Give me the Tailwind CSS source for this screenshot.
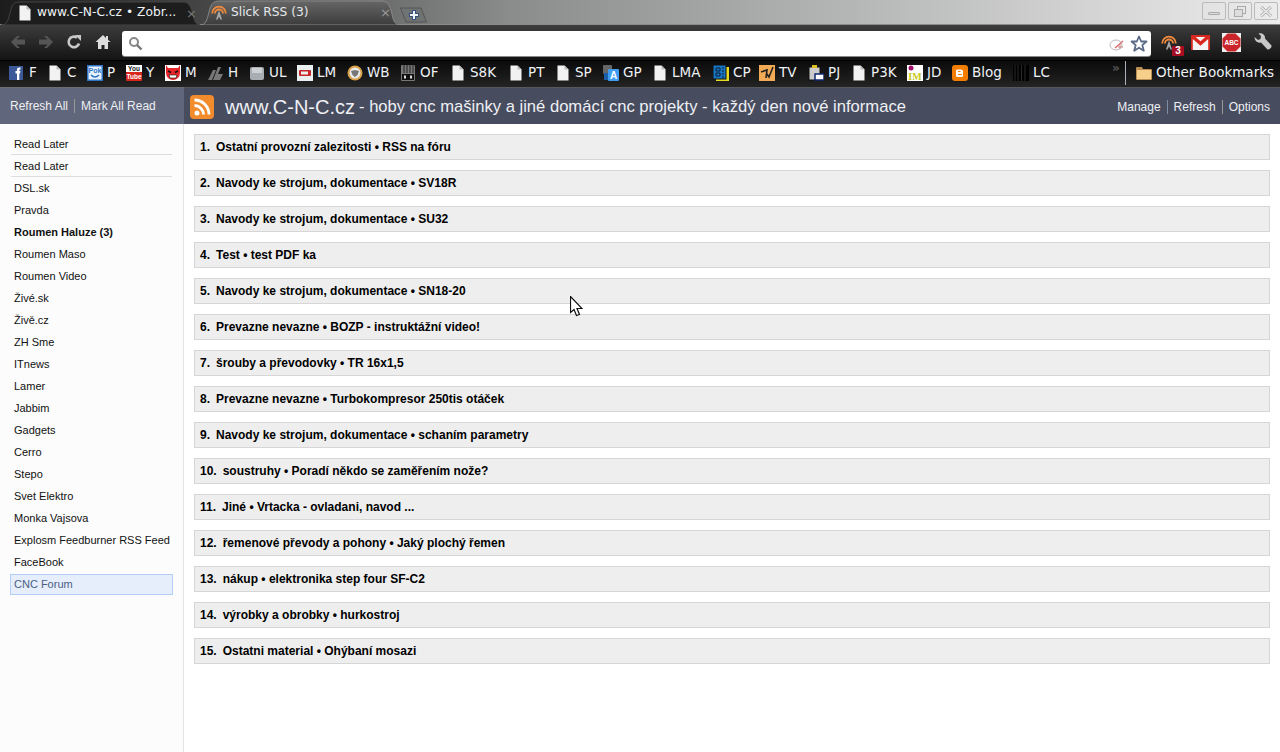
<!DOCTYPE html>
<html lang="en">
<head>
    <meta charset="UTF-8">
    <title>Slick RSS (3)</title>
    <script src="https://cdn.jsdelivr.net/npm/@tailwindcss/browser@4"></script>
</head>
<body class="relative h-[752px] w-[1280px] overflow-hidden bg-white font-['Liberation_Sans',sans-serif]">

    <svg class="hidden">
        <symbol id="doc" viewBox="0 0 16 16"><path d="M2.5 0.5h7l4 4v11h-11z" fill="#f2f2f2"/><path d="M9.5 0.5v4h4z" fill="#bbb"/></symbol>
        <symbol id="tower" viewBox="0 0 16 16"><g fill="none" stroke="#f08a3c" stroke-width="1.8"><path d="M1.2 9.5a6.8 6.800 0 0 1 13.600 0"/><path d="M4 9.500a4 4 0 0 1 8 0"/></g><path d="M8 6.500l3 9h-1.500l-1.500-3-1.500 3H5z" fill="#aaa"/></symbol>
    </svg>

    <!-- tab strip -->
    <div class="relative flex h-[25px] items-end border-b border-[#8a8a8a] bg-gradient-to-r from-[#1c1c1c] via-[#8b8d8c] via-40% to-[#ececec] pl-[1px] font-['DejaVu_Sans',sans-serif] text-[12.25px]">
        <div class="relative flex h-[23px] w-[202px] items-center pl-[32px] text-[#eef2f6]">
            <svg class="absolute left-0 top-0" width="200" height="24"><path d="M0 24C6 24 7 20 9 12 11 4 12 1 19 1H183C188 1 190 6 192 14 193 20 195 24 200 24Z" fill="#1d1d1d" stroke="#444"/></svg>
            <svg class="relative -ml-[16px] mr-[4px] h-[16px] w-[16px] shrink-0"><use href="#doc"/></svg>
            <span class="relative whitespace-nowrap">www.C-N-C.cz • Zobr...</span>
            <span class="absolute left-[185px] top-[3px] text-[13px] text-[#777]">×</span>
        </div>
        <div class="relative -ml-[3px] flex h-[24px] w-[200px] items-center pl-[11px] text-[#e4e8ec]">
            <svg class="absolute left-0 top-0" width="200" height="25"><defs><linearGradient id="tabg" x1="0" x2="0" y1="0" y2="1"><stop offset="0" stop-color="#666"/><stop offset="1" stop-color="#3c3c3c"/></linearGradient></defs><path d="M0 25C6 25 7 20 9 12 11 4 13 1 20 1H182C188 1 190 6 192 14 193 20 195 25 200 25Z" fill="url(#tabg)" stroke="#888"/></svg>
            <svg class="relative mr-[4px] h-[16px] w-[16px] shrink-0"><use href="#tower"/></svg>
            <span class="relative whitespace-nowrap">Slick RSS (3)</span>
            <span class="absolute left-[180px] top-[3px] text-[13px] text-[#999]">×</span>
        </div>
        <div class="relative mb-[2px] flex h-[15px] w-[27px] items-center justify-center">
            <svg class="absolute left-0 top-0" width="27" height="16"><path d="M0.500 1H21L26.500 15H6Z" fill="#6f7373" stroke="#555"/></svg>
            <svg class="relative" width="12" height="12"><path d="M6 1v10M1 6h10" stroke="#33507f" stroke-width="4"/><path d="M6 2v8M2 6h8" stroke="#f0f3f8" stroke-width="2"/></svg>
        </div>
        <div class="absolute right-[2px] top-[2px] flex gap-[2px]">
            <div class="flex h-[18px] w-[24px] items-center justify-center rounded-[2px] border border-[#bbb]"><div class="mt-[4px] h-[3px] w-[12px] rounded-[1px] border border-[#aaa] bg-[#ddd]"></div></div>
            <div class="flex h-[18px] w-[24px] items-center justify-center rounded-[2px] border border-[#bbb]"><svg width="12" height="11"><rect x="3.5" y="0.5" width="8" height="7" fill="none" stroke="#aaa"/><rect x="0.5" y="3.5" width="8" height="7" fill="#ddd" stroke="#aaa"/></svg></div>
            <div class="flex h-[18px] w-[24px] items-center justify-center rounded-[2px] border border-[#bbb]"><svg width="12" height="11"><path d="M1 1l10 9M11 1L1 10" stroke="#aaa" stroke-width="3"/><path d="M1 1l10 9M11 1L1 10" stroke="#eee" stroke-width="1.400"/></svg></div>
        </div>
    </div>

    <!-- toolbar -->
    <div class="flex h-[35px] items-start bg-gradient-to-b from-[#3d3d3d] to-[#141414]">
        <div class="flex h-[35px] w-[122px] shrink-0 items-center pb-[1px] pl-[10px]">
            <svg class="mr-[12px]" width="16" height="16" viewBox="0 0 16 16"><path d="M1 8l6-6h3L6.500 5.500H15v5H6.500L10 14H7z" fill="#555"/></svg>
            <svg class="mr-[12px]" width="16" height="16" viewBox="0 0 16 16"><path d="M15 8L9 2H6L9.500 5.500H1v5h8.500L6 14h3z" fill="#555"/></svg>
            <svg class="mr-[13px]" width="16" height="16" viewBox="0 0 16 16"><path d="M13 9.500A5.300 5.300 0 1 1 11 3.600" fill="none" stroke="#c8c8c8" stroke-width="2.600"/><path d="M9 1l6 0v6z" fill="#c8c8c8"/></svg>
            <svg width="16" height="16" viewBox="0 0 16 16"><path d="M8 1L0.500 8H3v7h3.500v-4h3v4H13V8h2.500L13 5.700V2h-2v1.900z" fill="#ddd"/></svg>
        </div>
        <div class="mt-[6px] flex h-[25px] w-[1029px] shrink-0 items-center rounded-[3px] bg-white pl-[6px] pr-[3px] shadow-[0_1px_0_#888]">
            <svg width="15" height="15" viewBox="0 0 15 15"><circle cx="6" cy="6" r="4" fill="none" stroke="#888" stroke-width="2"/><path d="M9 9l4.500 4.500" stroke="#777" stroke-width="2.400"/></svg>
            <svg class="ml-auto mr-[5px]" width="16" height="16" viewBox="0 0 16 16"><ellipse cx="7" cy="9" rx="6" ry="5" fill="none" stroke="#bbb"/><path d="M6 12L14 5" stroke="#d66" stroke-width="1.200"/><path d="M11 7v6M9 11h5" stroke="#c88"/></svg>
            <svg width="18" height="18" viewBox="0 0 18 18"><path d="M9 1.500l2.200 5h5.300l-4.200 3.600 1.500 5.600L9 12.700l-4.800 3 1.500-5.600L1.500 6.500h5.300z" fill="#fff" stroke="#5b6b88" stroke-width="1.800" stroke-linejoin="round"/></svg>
        </div>
        <div class="flex h-[35px] flex-1 items-center pb-[1px] pl-[10px]">
            <div class="relative mr-[14px] h-[16px] w-[16px]">
                <svg class="h-[16px] w-[16px]"><use href="#tower"/></svg>
                <span class="absolute left-[11px] top-[12px] flex h-[10px] w-[12px] items-center justify-center rounded-[1px] bg-[#a80e22] text-[10px] font-bold leading-none text-white">3</span>
            </div>
            <svg class="mr-[12px]" width="19" height="15" viewBox="0 0 19 15"><rect width="19" height="15" fill="#d8281f"/><rect x="1.500" y="2" width="16" height="13" fill="#f4f4f4"/><path d="M1.500 1.500L9.500 8.500 17.500 1.500" fill="none" stroke="#d8281f" stroke-width="3.500"/><path d="M0.800 1V15M18.200 1V15" stroke="#d8281f" stroke-width="1.600"/></svg>
            <svg class="mr-[13px]" width="19" height="19" viewBox="0 0 19 19"><rect width="19" height="19" fill="#eee"/><path d="M5.500 0.500h8l5 5v8l-5 5h-8l-5-5v-8z" fill="#c9252b"/><text x="9.500" y="12" text-anchor="middle" font-size="6.500" font-weight="bold" fill="#fff" font-family="Liberation Sans">ABC</text></svg>
            <svg width="18" height="18" viewBox="0 0 18 18"><path d="M0.500 4L4 7 6.500 6 7 3 4.500 0.500C8 -0.500 11.500 2 11 5.500L17.500 12.500C18 14 15.500 17 13.500 16.500L7 9.500C4 10.500 0.500 8 0.500 4z" fill="#c8c8c8"/></svg>
        </div>
    </div>

    <!-- bookmarks bar -->
    <div class="flex h-[27px] items-center border-t border-[#000] bg-gradient-to-b from-[#0b0b0b] to-[#242424] pb-[3px] pl-[9px] font-['DejaVu_Sans',sans-serif] text-[13.5px] text-[#eef2f6]">
        <div class="flex w-[38px] items-center gap-[4px]"><svg width="16" height="16" viewBox="0 0 16 16"><rect width="14" height="14" y="1" fill="#3b5998"/><path d="M8 15V8.500H6.500V6H8V4.500C8 3 9 2.300 11.500 2.500V4.500C10 4.500 10.300 5 10.300 6H11.500L11 8.500H10.300V15z" fill="#fff"/></svg><span>F</span></div>
        <div class="flex w-[40px] items-center gap-[4px]"><svg class="h-[16px] w-[16px]"><use href="#doc"/></svg><span>C</span></div>
        <div class="flex w-[39px] items-center gap-[4px]"><svg width="16" height="16" viewBox="0 0 16 16"><rect width="16" height="16" fill="#2e75c6"/><rect x="1.500" y="1.500" width="13" height="13" fill="#e8f2fc"/><text x="8" y="8" text-anchor="middle" font-size="7" font-weight="bold" fill="#2e75c6" font-family="Liberation Sans">Pok</text><path d="M4 10q4 4 8 0" fill="none" stroke="#2e75c6" stroke-width="1.600"/></svg><span>P</span></div>
        <div class="flex w-[39px] items-center gap-[4px]"><svg width="16" height="16" viewBox="0 0 16 16"><rect width="16" height="7" fill="#fff"/><rect y="7" width="16" height="9" rx="1" fill="#d9261c"/><text x="8" y="6.200" text-anchor="middle" font-size="6.500" font-weight="bold" fill="#222" font-family="Liberation Sans">You</text><text x="8" y="14" text-anchor="middle" font-size="6.500" font-weight="bold" fill="#fff" font-family="Liberation Sans">Tube</text></svg><span>Y</span></div>
        <div class="flex w-[43px] items-center gap-[4px]"><svg width="16" height="16" viewBox="0 0 16 16"><rect width="16" height="16" fill="#fff"/><path d="M1 0l2 3h10l2-3v8a7 7 0 0 1-14 0z" fill="#e8252a"/><path d="M3 6l3 1.500M13 6l-3 1.500" stroke="#111" stroke-width="1.500"/><path d="M4 10h8l-1 3H5z" fill="#fff" stroke="#111" stroke-width=".6"/></svg><span>M</span></div>
        <div class="flex w-[41px] items-center gap-[4px]"><svg width="16" height="16" viewBox="0 0 16 16"><path d="M0 15L5 5h3l-4 10zM5 15L10 2h3l-3 7h5l-3 6z" fill="#777"/></svg><span>H</span></div>
        <div class="flex w-[48px] items-center gap-[4px]"><svg width="16" height="16" viewBox="0 0 16 16"><rect x="1" y="2" width="14" height="13" rx="2" fill="#a8adb4"/><rect x="3" y="3" width="10" height="5" fill="#cdd1d6"/></svg><span>UL</span></div>
        <div class="flex w-[50px] items-center gap-[4px]"><svg width="16" height="16" viewBox="0 0 16 16"><rect width="16" height="16" fill="#eceff0"/><rect x="2" y="5" width="12" height="6" rx="1" fill="#c8262a"/><rect x="4" y="6.500" width="7" height="3" fill="#eee"/></svg><span>LM</span></div>
        <div class="flex w-[53px] items-center gap-[4px]"><svg width="16" height="16" viewBox="0 0 16 16"><circle cx="8" cy="8" r="7.500" fill="#d9a04a"/><circle cx="8" cy="8" r="5.500" fill="#e8e8e8"/><path d="M4 6l4-1 4 1-1.500 4L8 12l-2.500-2z" fill="#777"/></svg><span>WB</span></div>
        <div class="flex w-[50px] items-center gap-[4px]"><svg width="16" height="16" viewBox="0 0 16 16"><rect x="1" y="0" width="14" height="16" rx="1" fill="#777"/><path d="M4 0v8M7 0v8M10 0v8M13 0v8" stroke="#222"/><rect x="2" y="9" width="12" height="6" fill="#111"/><rect x="4" y="10.500" width="2" height="3" fill="#ddd"/><rect x="10" y="10.500" width="2" height="3" fill="#ddd"/></svg><span>OF</span></div>
        <div class="flex w-[58px] items-center gap-[4px]"><svg class="h-[16px] w-[16px]"><use href="#doc"/></svg><span>S8K</span></div>
        <div class="flex w-[47px] items-center gap-[4px]"><svg class="h-[16px] w-[16px]"><use href="#doc"/></svg><span>PT</span></div>
        <div class="flex w-[48px] items-center gap-[4px]"><svg class="h-[16px] w-[16px]"><use href="#doc"/></svg><span>SP</span></div>
        <div class="flex w-[49px] items-center gap-[4px]"><svg width="16" height="16" viewBox="0 0 16 16"><rect x="0" y="0" width="9" height="9" rx="1" fill="#666"/><rect x="1" y="8" width="6" height="7" fill="#1a5fa8"/><rect x="5" y="4" width="11" height="12" rx="1" fill="#3f9cf0"/><text x="10.500" y="14" text-anchor="middle" font-size="10" font-weight="bold" fill="#fff" font-family="Liberation Sans">A</text></svg><span>GP</span></div>
        <div class="flex w-[61px] items-center gap-[4px]"><svg class="h-[16px] w-[16px]"><use href="#doc"/></svg><span>LMA</span></div>
        <div class="flex w-[46px] items-center gap-[4px]"><svg width="16" height="16" viewBox="0 0 16 16"><rect x="3" y="2" width="13" height="14" fill="#e8dc20"/><rect x="0" y="0" width="13" height="14" fill="#1877c4" stroke="#111"/><path d="M3 3h4v3H3zM3 8h4v3H3zM9 3h2M9 6h2M9 9h2M9 12h2" fill="none" stroke="#0b1c30"/></svg><span>CP</span></div>
        <div class="flex w-[49px] items-center gap-[4px]"><svg width="16" height="16" viewBox="0 0 16 16"><rect width="16" height="16" fill="#f2aa55"/><path d="M2 7l6-2-1 8M8 9l2 3 4-10" fill="none" stroke="#222" stroke-width="1.600"/></svg><span>TV</span></div>
        <div class="flex w-[43px] items-center gap-[4px]"><svg width="16" height="16" viewBox="0 0 16 16"><rect x="1" y="2" width="11" height="13" fill="#ccc" stroke="#111"/><rect x="4" y="0" width="5" height="3" fill="#ddc020"/><rect x="7" y="9" width="9" height="6" fill="#fff" stroke="#102a70" stroke-width="1.500"/></svg><span>PJ</span></div>
        <div class="flex w-[56px] items-center gap-[4px]"><svg class="h-[16px] w-[16px]"><use href="#doc"/></svg><span>P3K</span></div>
        <div class="flex w-[45px] items-center gap-[4px]"><svg width="16" height="16" viewBox="0 0 16 16"><rect width="16" height="16" fill="#fff"/><circle cx="4" cy="3" r="2.500" fill="#a0106a"/><text x="8" y="15" text-anchor="middle" font-size="10" font-weight="bold" fill="#c9c920" font-family="Liberation Serif">IM</text></svg><span>JD</span></div>
        <div class="flex w-[61px] items-center gap-[4px]"><svg width="16" height="16" viewBox="0 0 16 16"><rect width="16" height="16" rx="3" fill="#f57d00"/><path d="M5 4.500h4a2 2 0 0 1 2 2.500v4a1 1 0 0 1-1 1H5a1 1 0 0 1-1-1V5.500a1 1 0 0 1 1-1z" fill="#fff"/><path d="M6 6.500h2.500M6 9.500h4" stroke="#f57d00" stroke-width="1.200"/></svg><span>Blog</span></div>
        <div class="flex w-[99px] items-center gap-[4px]"><svg width="16" height="16" viewBox="0 0 16 16"><rect width="16" height="16" fill="#000"/><path d="M2 0v16M5 0v16M8.500 0v16M12 0v16" stroke="#2a2a2a"/></svg><span>LC</span></div>
        <span class="-mt-[10px] w-[13px] text-[12px] font-bold leading-none text-[#555]">»</span>
        <div class="h-[24px] w-[1px] bg-[#aab0bb]"></div>
        <div class="ml-[10px] flex items-center gap-[4px] whitespace-nowrap"><svg width="16" height="16" viewBox="0 0 16 16"><path d="M0 3a1 1 0 0 1 1-1h5l1 2h8a1 1 0 0 1 1 1v9a1 1 0 0 1-1 1H1a1 1 0 0 1-1-1z" fill="#b98f55"/><path d="M1 5h14v9H1z" fill="#f6cf8a"/></svg><span>Other Bookmarks</span></div>
    </div>

    <!-- slick rss header -->
    <div class="flex h-[37px] text-[12px] text-[#eef0f4]">
        <div class="flex w-[184px] shrink-0 items-center border-t border-[#6a6d72] bg-[#60667b] pl-[10px]">
            <span>Refresh All</span>
            <span class="mx-[6px] h-[14px] w-[1px] bg-[#9a9a94]"></span>
            <span>Mark All Read</span>
        </div>
        <div class="flex flex-1 items-center border-t border-[#55585c] bg-[#474c5f] pl-[6px] pr-[10px] pt-[2px]">
            <svg width="24" height="24" viewBox="0 0 24 24"><rect width="24" height="24" rx="4" fill="#f28b2c"/><circle cx="7" cy="18" r="2.500" fill="#fff"/><path d="M4.500 10.500a9 9 0 0 1 9 9M4.500 5a14.500 14.500 0 0 1 14.500 14.500" fill="none" stroke="#fff" stroke-width="2.800"/></svg>
            <span class="ml-[11px] whitespace-nowrap text-[20px]">www.C-N-C.cz</span>
            <span class="ml-[4px] whitespace-nowrap text-[16.6px]">- hoby cnc mašinky a jiné domácí cnc projekty - každý den nové informace</span>
            <span class="ml-auto">Manage</span>
            <span class="mx-[6px] h-[14px] w-[1px] bg-[#7f8ea8]"></span>
            <span>Refresh</span>
            <span class="mx-[6px] h-[14px] w-[1px] bg-[#9a9a94]"></span>
            <span>Options</span>
        </div>
    </div>

    <!-- body -->
    <div class="flex h-[628px]">
        <aside class="w-[184px] shrink-0 border-r border-[#e4e4e4] bg-[#fcfcfc] pl-[10px] pr-[10px] pt-[9px] text-[11px] text-[#111]">
            <div class="mx-[1px] flex h-[22px] items-center border-b border-[#ddd] pl-[3px] pt-[2px]">Read Later</div>
            <div class="mx-[1px] flex h-[22px] items-center border-b border-[#ddd] pl-[3px] pt-[2px]">Read Later</div>
            <div class="flex h-[22px] items-center pl-[4px]">DSL.sk</div>
            <div class="flex h-[22px] items-center pl-[4px]">Pravda</div>
            <div class="flex h-[22px] items-center pl-[4px] font-bold">Roumen Haluze (3)</div>
            <div class="flex h-[22px] items-center pl-[4px]">Roumen Maso</div>
            <div class="flex h-[22px] items-center pl-[4px]">Roumen Video</div>
            <div class="flex h-[22px] items-center pl-[4px]">Živé.sk</div>
            <div class="flex h-[22px] items-center pl-[4px]">Živě.cz</div>
            <div class="flex h-[22px] items-center pl-[4px]">ZH Sme</div>
            <div class="flex h-[22px] items-center pl-[4px]">ITnews</div>
            <div class="flex h-[22px] items-center pl-[4px]">Lamer</div>
            <div class="flex h-[22px] items-center pl-[4px]">Jabbim</div>
            <div class="flex h-[22px] items-center pl-[4px]">Gadgets</div>
            <div class="flex h-[22px] items-center pl-[4px]">Cerro</div>
            <div class="flex h-[22px] items-center pl-[4px]">Stepo</div>
            <div class="flex h-[22px] items-center pl-[4px]">Svet Elektro</div>
            <div class="flex h-[22px] items-center pl-[4px]">Monka Vajsova</div>
            <div class="flex h-[22px] items-center pl-[4px] whitespace-nowrap">Explosm Feedburner RSS Feed</div>
            <div class="flex h-[22px] items-center pl-[4px]">FaceBook</div>
            <div class="mt-[1px] flex h-[21px] items-center border border-[#b4cff5] bg-[#e6edfb] pl-[3px] text-[#4a5f85]">CNC Forum</div>
        </aside>
        <main class="flex flex-1 flex-col gap-[10px] px-[10px] pt-[10px] text-[12px] font-bold text-black">
            <div class="flex h-[26px] items-center border border-[#d6d6d6] bg-[#eeeeee] pl-[5px]"><span class="mr-[6px]">1.</span>Ostatní provozní zalezitosti • RSS na fóru</div>
            <div class="flex h-[26px] items-center border border-[#d6d6d6] bg-[#eeeeee] pl-[5px]"><span class="mr-[6px]">2.</span>Navody ke strojum, dokumentace • SV18R</div>
            <div class="flex h-[26px] items-center border border-[#d6d6d6] bg-[#eeeeee] pl-[5px]"><span class="mr-[6px]">3.</span>Navody ke strojum, dokumentace • SU32</div>
            <div class="flex h-[26px] items-center border border-[#d6d6d6] bg-[#eeeeee] pl-[5px]"><span class="mr-[6px]">4.</span>Test • test PDF ka</div>
            <div class="flex h-[26px] items-center border border-[#d6d6d6] bg-[#eeeeee] pl-[5px]"><span class="mr-[6px]">5.</span>Navody ke strojum, dokumentace • SN18-20</div>
            <div class="flex h-[26px] items-center border border-[#d6d6d6] bg-[#eeeeee] pl-[5px]"><span class="mr-[6px]">6.</span>Prevazne nevazne • BOZP - instruktážní video!</div>
            <div class="flex h-[26px] items-center border border-[#d6d6d6] bg-[#eeeeee] pl-[5px]"><span class="mr-[6px]">7.</span>šrouby a převodovky • TR 16x1,5</div>
            <div class="flex h-[26px] items-center border border-[#d6d6d6] bg-[#eeeeee] pl-[5px]"><span class="mr-[6px]">8.</span>Prevazne nevazne • Turbokompresor 250tis otáček</div>
            <div class="flex h-[26px] items-center border border-[#d6d6d6] bg-[#eeeeee] pl-[5px]"><span class="mr-[6px]">9.</span>Navody ke strojum, dokumentace • schaním parametry</div>
            <div class="flex h-[26px] items-center border border-[#d6d6d6] bg-[#eeeeee] pl-[5px]"><span class="mr-[6px]">10.</span>soustruhy • Poradí někdo se zaměřením nože?</div>
            <div class="flex h-[26px] items-center border border-[#d6d6d6] bg-[#eeeeee] pl-[5px]"><span class="mr-[6px]">11.</span>Jiné • Vrtacka - ovladani, navod ...</div>
            <div class="flex h-[26px] items-center border border-[#d6d6d6] bg-[#eeeeee] pl-[5px]"><span class="mr-[6px]">12.</span>řemenové převody a pohony • Jaký plochý řemen</div>
            <div class="flex h-[26px] items-center border border-[#d6d6d6] bg-[#eeeeee] pl-[5px]"><span class="mr-[6px]">13.</span>nákup • elektronika step four SF-C2</div>
            <div class="flex h-[26px] items-center border border-[#d6d6d6] bg-[#eeeeee] pl-[5px]"><span class="mr-[6px]">14.</span>výrobky a obrobky • hurkostroj</div>
            <div class="flex h-[26px] items-center border border-[#d6d6d6] bg-[#eeeeee] pl-[5px]"><span class="mr-[6px]">15.</span>Ostatni material • Ohýbaní mosazi</div>
        </main>
    </div>

    <!-- mouse cursor -->
    <svg class="absolute left-[570px] top-[296px]" width="13" height="21" viewBox="0 0 13 21"><path d="M0.500 0.500V16.500L4 13.500 6.500 19.500 9.500 18.500 7 12.500H12z" fill="#fff" stroke="#111" stroke-width="1.200"/></svg>
</body>
</html>
